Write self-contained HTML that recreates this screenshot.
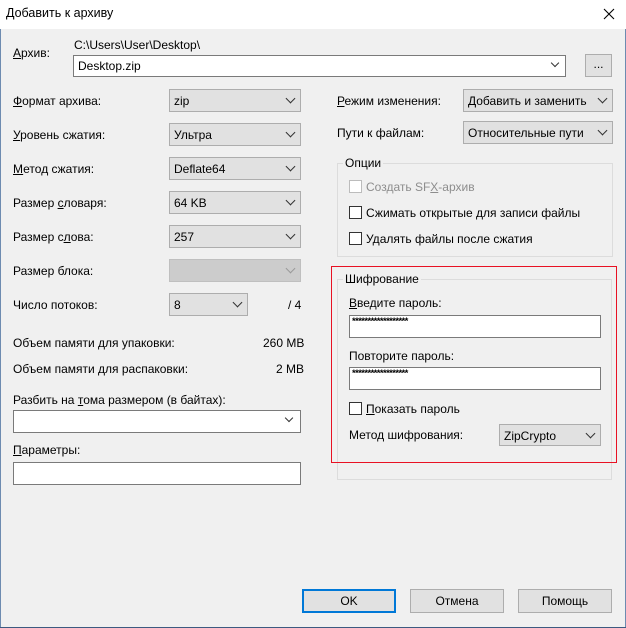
<!DOCTYPE html><html><head><meta charset="utf-8"><style>
*{box-sizing:border-box}
body{margin:0;width:626px;height:628px;overflow:hidden;background:#f0f0f0;font:12px "Liberation Sans","Noto Sans CJK SC",sans-serif;color:#000;position:relative}
.a{position:absolute;white-space:nowrap}
.title{left:0;top:0;width:626px;height:29px;background:#fff}
.cb{position:absolute;height:23px;background:#e1e1e1;border:1px solid #adadad;padding:4px 0 0 4px}
.cb:after{content:"";position:absolute;right:6px;top:5px;width:6px;height:6px;border-right:1px solid #333;border-bottom:1px solid #333;transform:rotate(45deg)}
.cb.dis{background:#ccc;border-color:#bfbfbf}.cb.dis:after{border-color:#999}
.in{position:absolute;height:23px;background:#fff;border:1px solid #7a7a7a;padding:3px 0 0 4px}
.ck{position:absolute;width:13px;height:13px;border:1px solid #333;background:#fff}
.gb{position:absolute;border:1px solid #dcdcdc}
.gl{position:absolute;background:#f0f0f0;padding:0 2px}
.btn{position:absolute;height:24px;background:#e1e1e1;border:1px solid #adadad;text-align:center;line-height:22px}
u{text-decoration:underline}
.pw{position:absolute;left:2px;top:1px;font-size:9.5px;font-weight:bold;letter-spacing:-0.6px;line-height:10px}
</style></head><body>
<div class="a title"></div>
<div class="a" style="left:6px;top:6px;font-size:12.5px">Добавить к архиву</div>
<svg class="a" style="left:603px;top:8px" width="12" height="12"><path d="M1 1L11 11M11 1L1 11" stroke="#000" stroke-width="1.1"/></svg>
<div class="a" style="left:0;top:29px;width:1px;height:599px;background:#6d8bb0"></div>
<div class="a" style="right:0;top:29px;width:1px;height:599px;background:#6d8bb0"></div>
<div class="a" style="left:0;bottom:0;width:626px;height:1px;background:#3d5a80"></div>

<div class="a" style="left:13px;top:46px"><u>А</u>рхив:</div>
<div class="a" style="left:74px;top:38px">C:\Users\User\Desktop\</div>
<div class="in" style="left:73px;top:55px;width:493px;height:22px">Desktop.zip</div>
<div class="a" style="left:552px;top:60px;width:6px;height:6px;border-right:1px solid #333;border-bottom:1px solid #333;transform:rotate(45deg)"></div>
<div class="btn" style="left:585px;top:54px;width:27px;height:23px;line-height:18px">...</div>

<div class="a" style="left:13px;top:94px"><u>Ф</u>ормат архива:</div>
<div class="cb" style="left:169px;top:89px;width:132px">zip</div>
<div class="a" style="left:13px;top:128px"><u>У</u>ровень сжатия:</div>
<div class="cb" style="left:169px;top:123px;width:132px">Ультра</div>
<div class="a" style="left:13px;top:162px"><u>М</u>етод сжатия:</div>
<div class="cb" style="left:169px;top:157px;width:132px">Deflate64</div>
<div class="a" style="left:13px;top:196px">Размер <u>с</u>ловаря:</div>
<div class="cb" style="left:169px;top:191px;width:132px">64 KB</div>
<div class="a" style="left:13px;top:230px">Размер с<u>л</u>ова:</div>
<div class="cb" style="left:169px;top:225px;width:132px">257</div>
<div class="a" style="left:13px;top:264px">Размер блока:</div>
<div class="cb dis" style="left:169px;top:259px;width:132px"></div>
<div class="a" style="left:13px;top:298px">Число потоков:</div>
<div class="cb" style="left:169px;top:293px;width:79px">8</div>
<div class="a" style="left:288px;top:298px">/ 4</div>
<div class="a" style="left:13px;top:336px">Объем памяти для упаковки:</div>
<div class="a" style="left:263px;top:336px">260 MB</div>
<div class="a" style="left:13px;top:362px">Объем памяти для распаковки:</div>
<div class="a" style="left:276px;top:362px">2 MB</div>
<div class="a" style="left:13px;top:393px">Разбить на <u>т</u>ома размером (в байтах):</div>
<div class="in" style="left:13px;top:410px;width:288px"></div>
<div class="a" style="left:286px;top:415px;width:6px;height:6px;border-right:1px solid #333;border-bottom:1px solid #333;transform:rotate(45deg)"></div>
<div class="a" style="left:13px;top:443px"><u>П</u>араметры:</div>
<div class="in" style="left:13px;top:462px;width:288px"></div>

<div class="a" style="left:337px;top:94px"><u>Р</u>ежим изменения:</div>
<div class="cb" style="left:463px;top:89px;width:150px">Добавить и заменить</div>
<div class="a" style="left:337px;top:126px">Пути к файлам:</div>
<div class="cb" style="left:463px;top:121px;width:150px">Относительные пути</div>

<div class="gb" style="left:337px;top:163px;width:276px;height:94px"></div>
<div class="gl" style="left:343px;top:156px">Опции</div>
<div class="ck" style="left:349px;top:180px;border-color:#bcbcbc"></div>
<div class="a" style="left:366px;top:180px;color:#8d8d8d">Создать SF<u>X</u>-архив</div>
<div class="ck" style="left:349px;top:206px"></div>
<div class="a" style="left:366px;top:206px">Сжимать открытые для записи файлы</div>
<div class="ck" style="left:349px;top:232px"></div>
<div class="a" style="left:366px;top:232px">Удалять файлы после сжатия</div>

<div class="gb" style="left:337px;top:279px;width:275px;height:201px"></div>
<div class="gl" style="left:343px;top:272px">Шифрование</div>
<div class="a" style="left:349px;top:296px"><u>В</u>ведите пароль:</div>
<div class="in" style="left:349px;top:315px;width:252px"><span class="pw">******************</span></div>
<div class="a" style="left:349px;top:349px">Повторите пароль:</div>
<div class="in" style="left:349px;top:367px;width:252px"><span class="pw">******************</span></div>
<div class="ck" style="left:349px;top:402px"></div>
<div class="a" style="left:366px;top:402px"><u>П</u>оказать пароль</div>
<div class="a" style="left:349px;top:428px">Метод шифрования:</div>
<div class="cb" style="left:499px;top:424px;width:102px;height:22px">ZipCrypto</div>
<div class="a" style="left:331px;top:266px;width:286px;height:197px;border:1px solid #e81123"></div>

<div class="btn" style="left:302px;top:589px;width:94px;border:2px solid #0078d7;line-height:20px">OK</div>
<div class="btn" style="left:410px;top:589px;width:94px">Отмена</div>
<div class="btn" style="left:518px;top:589px;width:94px">Помощь</div>
</body></html>
